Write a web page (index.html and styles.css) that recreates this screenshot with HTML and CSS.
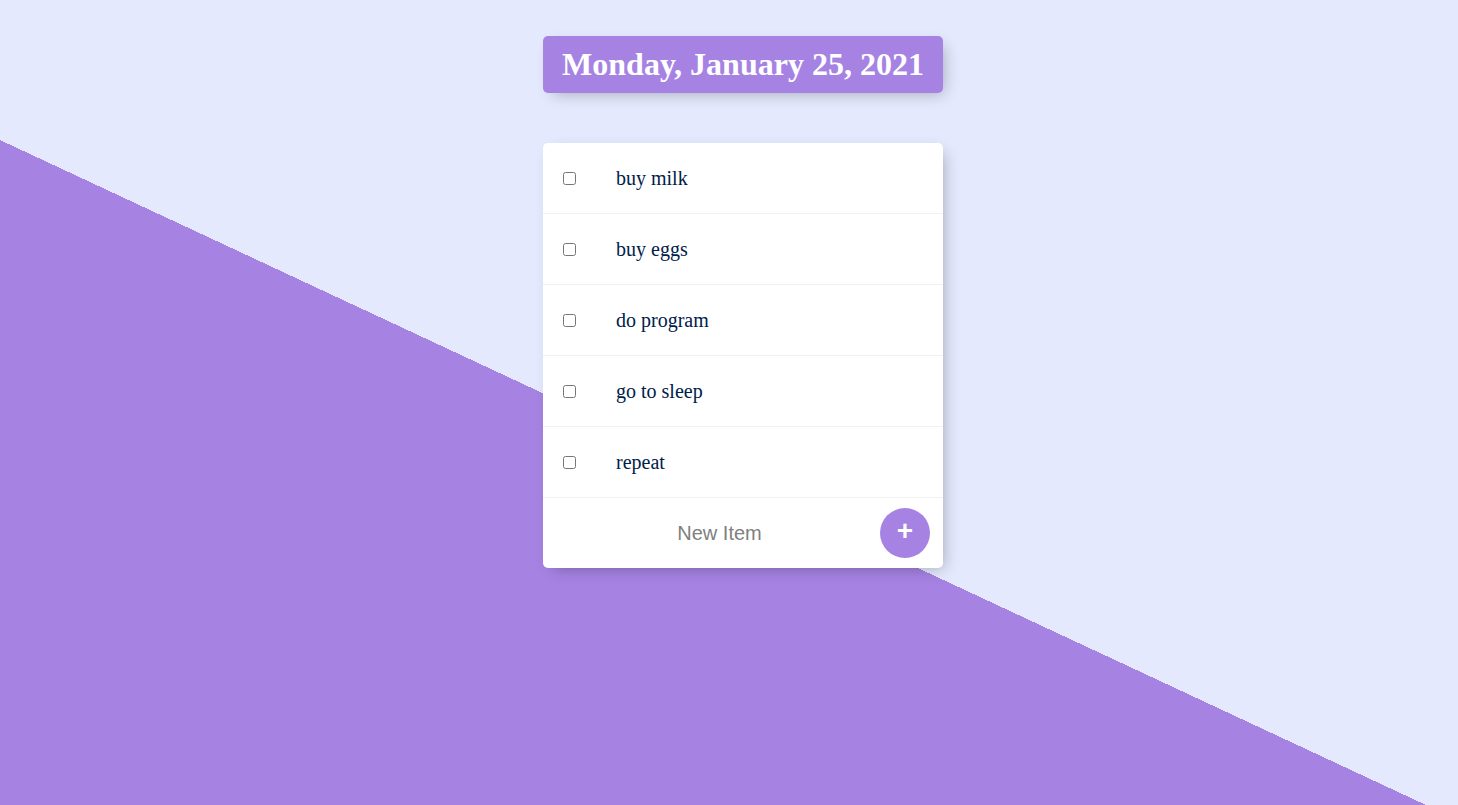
FILE: index.html
```html
<!DOCTYPE html>
<html lang="en">
<head>
<meta charset="utf-8">
<title>To Do List</title>
<link rel="stylesheet" href="styles.css">
</head>
<body>
  <div class="box heading">
    <h1>Monday, January 25, 2021</h1>
  </div>
  <div class="box">
    <div class="item"><input type="checkbox"><p>buy milk</p></div>
    <div class="item"><input type="checkbox"><p>buy eggs</p></div>
    <div class="item"><input type="checkbox"><p>do program</p></div>
    <div class="item"><input type="checkbox"><p>go to sleep</p></div>
    <div class="item"><input type="checkbox"><p>repeat</p></div>
    <form class="item new-form" action="/" method="post">
      <input class="new-input" type="text" name="newItem" placeholder="New Item" autocomplete="off">
      <button class="add-btn" type="submit" name="list">+</button>
    </form>
  </div>
</body>
</html>
```

FILE: styles.css
```css
html {
  background-color: #E4E9FD;
  background-image: linear-gradient(25deg, #A683E3 50%, #E4E9FD 50%);
  min-height: 960px;
  font-family: "Liberation Serif", "Times New Roman", serif;
}

body {
  margin: 0;
  padding: 36px 0 0 28px;
}

.box {
  width: 400px;
  margin: 0 auto 50px;
  background: #ffffff;
  border-radius: 5px;
  box-shadow: 5px 5px 15px -5px rgba(0, 0, 0, 0.3);
}

.heading {
  background-color: #A683E3;
  text-align: center;
}

.heading h1 {
  margin: 0;
  padding: 10px;
  color: #ffffff;
  font-size: 32px;
  font-weight: bold;
  line-height: 37px;
}

.item {
  min-height: 70px;
  display: flex;
  align-items: center;
  border-bottom: 1px solid #F1F1F1;
}

.item:last-child {
  border-bottom: 0;
}

.item input[type="checkbox"] {
  margin: 20px;
  width: 13px;
  height: 13px;
}

.item p {
  margin: 0;
  padding: 20px;
  font-size: 20px;
  color: #00204a;
  line-height: 23px;
}

.new-form {
  margin: 0 0 0 20px;
  height: 70px;
  gap: 4px;
}

.new-input {
  text-align: center;
  height: 60px;
  width: 313px;
  padding: 0;
  border: none;
  background: transparent;
  font-family: "Liberation Sans", Arial, sans-serif;
  font-size: 20px;
  outline: none;
}

.new-input::placeholder {
  color: grey;
  opacity: 1;
}

.add-btn {
  min-height: 50px;
  width: 50px;
  height: 50px;
  border-radius: 50%;
  border: 0;
  background-color: #A683E3;
  color: #ffffff;
  font-family: "Liberation Sans", Arial, sans-serif;
  font-size: 28px;
  font-weight: bold;
  line-height: 1;
  padding: 0 0 4px;
}
```
